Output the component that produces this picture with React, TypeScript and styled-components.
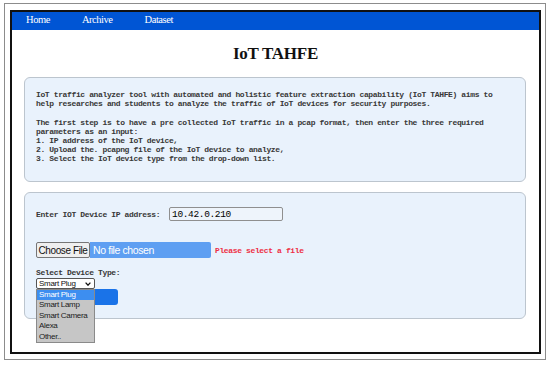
import React from "react";
import styled, { createGlobalStyle } from "styled-components";

const GlobalStyle = createGlobalStyle`
  html, body { margin: 0; padding: 0; background: #fff; }
  body { width: 550px; height: 366px; overflow: hidden; }
`;

const mono = `"Liberation Mono", "DejaVu Sans Mono", monospace`;
const sans = `"Liberation Sans", Arial, sans-serif`;
const serif = `"Liberation Serif", "Times New Roman", serif`;

const Frame = styled.div`
  box-sizing: border-box;
  margin: 3px 0 0 4px;
  width: 542px;
  height: 357px;
  border: 1px solid #8c8c8c;
  padding: 6px 4px 5px 5px;
`;

const Page = styled.div`
  box-sizing: border-box;
  height: 100%;
  border: 2px solid #111;
  display: flex;
  flex-direction: column;
`;

const Nav = styled.nav`
  height: 18px;
  box-sizing: border-box;
  background: #0055d4;
  display: flex;
  align-items: center;
  gap: 32px;
  padding: 0 0 3px 14px;
`;

const NavLink = styled.a`
  font-family: ${serif};
  font-size: 10.5px;
  letter-spacing: -0.45px;
  color: #fff;
  text-decoration: none;
`;

const Title = styled.h1`
  margin: 14px 0 13px;
  text-align: center;
  font-family: ${serif};
  font-weight: bold;
  font-size: 17px;
  line-height: 20px;
  letter-spacing: -0.25px;
  color: #111;
`;

const Panel = styled.section<{ $top?: number }>`
  box-sizing: border-box;
  margin: ${(p) => p.$top ?? 0}px 13px 0 12px;
  background: #e9f2fc;
  border: 1px solid #bcc5ce;
  border-radius: 6px;
`;

const Description = styled.div`
  padding: 12px 11px 18px;
  font-family: ${mono};
  font-size: 8px;
  font-weight: bold;
  line-height: 9px;
  letter-spacing: -0.37px;
  color: #383838;
  white-space: nowrap;
`;

const Para = styled.p`
  margin: 0;
  & + & { margin-top: 10px; }
`;

const Form = styled.form`
  display: flex;
  flex-direction: column;
  align-items: flex-start;
  padding: 14px 11px 13px;
`;

const Row = styled.div<{ $top?: number }>`
  display: flex;
  align-items: center;
  margin-top: ${(p) => p.$top ?? 0}px;
`;

const MonoText = styled.label<{ $color?: string; $top?: number }>`
  font-family: ${mono};
  font-size: 8px;
  font-weight: bold;
  line-height: 9px;
  letter-spacing: -0.37px;
  color: ${(p) => p.$color ?? "#383838"};
  margin-top: ${(p) => p.$top ?? 0}px;
  white-space: nowrap;
`;

const IpInput = styled.input`
  box-sizing: border-box;
  margin: 0 0 0 9px;
  width: 114px;
  height: 14px;
  padding: 0 2px;
  border: 1px solid #8f8f8f;
  border-radius: 2px;
  background: #eef4fb;
  font-family: ${mono};
  font-size: 9.5px;
  letter-spacing: -0.35px;
  color: #000;
  outline: none;
`;

const FileButton = styled.button`
  box-sizing: border-box;
  height: 16px;
  width: 54px;
  padding: 0;
  border: 1px solid #767676;
  border-radius: 2px;
  background: #efefef;
  font-family: ${sans};
  font-size: 10px;
  letter-spacing: -0.4px;
  color: #111;
  white-space: nowrap;
`;

const FileStatus = styled.span`
  box-sizing: border-box;
  display: flex;
  align-items: center;
  height: 16px;
  width: 121px;
  padding-left: 3px;
  background: #5e9ff2;
  border-radius: 0 2px 2px 0;
  font-family: ${sans};
  font-size: 10.5px;
  letter-spacing: -0.4px;
  color: #fff;
  white-space: nowrap;
`;

const Error = styled(MonoText)`
  margin-left: 4px;
`;

const SelectWrap = styled.div`
  position: relative;
  margin-top: 1px;
`;

const SelectBox = styled.div`
  box-sizing: border-box;
  width: 59px;
  height: 11px;
  display: flex;
  align-items: center;
  justify-content: space-between;
  padding: 0 3px 0 2px;
  background: #fff;
  border: 1px solid #555;
  border-radius: 2px;
  font-family: ${sans};
  font-size: 8px;
  letter-spacing: -0.3px;
  color: #111;
`;

const Options = styled.ul`
  position: absolute;
  top: 100%;
  left: 0;
  z-index: 2;
  box-sizing: border-box;
  width: 59px;
  margin: 0;
  padding: 0;
  list-style: none;
  background: #c6c6c6;
  border: 1px solid #8a8a8a;
`;

const Option = styled.li<{ $active?: boolean }>`
  height: 10.4px;
  line-height: 10.4px;
  padding-left: 2px;
  font-family: ${sans};
  font-size: 8px;
  letter-spacing: -0.3px;
  color: ${(p) => (p.$active ? "#fff" : "#1a1a1a")};
  background: ${(p) => (p.$active ? "#3d8ef0" : "transparent")};
  white-space: nowrap;
`;

const Submit = styled.button`
  width: 82px;
  height: 16px;
  border: none;
  border-radius: 3px;
  background: #1a73e8;
`;

const Chevron = () => (
  <svg width="6" height="4" viewBox="0 0 6 4">
    <polyline points="0.6,0.6 3,3.2 5.4,0.6" fill="none" stroke="#111" strokeWidth="1.3" />
  </svg>
);

const options = ["Smart Plug", "Smart Lamp", "Smart Camera", "Alexa", "Other.."];

export default function App() {
  return (
    <>
      <GlobalStyle />
      <Frame>
        <Page>
          <Nav>
            <NavLink href="#">Home</NavLink>
            <NavLink href="#">Archive</NavLink>
            <NavLink href="#">Dataset</NavLink>
          </Nav>
          <Title>IoT TAHFE</Title>
          <Panel>
            <Description>
              <Para>
                IoT traffic analyzer tool with automated and holistic feature extraction capability (IoT TAHFE) aims to
                <br />
                help researches and students to analyze the traffic of IoT devices for security purposes.
              </Para>
              <Para>
                The first step is to have a pre collected IoT traffic in a pcap format, then enter the three required
                <br />
                parameters as an input:
                <br />
                1. IP address of the IoT device,
                <br />
                2. Upload the. pcapng file of the IoT device to analyze,
                <br />
                3. Select the IoT device type from the drop-down list.
              </Para>
            </Description>
          </Panel>
          <Panel $top={10}>
            <Form onSubmit={(e) => e.preventDefault()}>
              <Row>
                <MonoText htmlFor="ip">Enter IOT Device IP address:</MonoText>
                <IpInput id="ip" readOnly defaultValue="10.42.0.210" />
              </Row>
              <Row $top={21}>
                <FileButton type="button">Choose File</FileButton>
                <FileStatus>No file chosen</FileStatus>
                <Error $color="#ee2f45">Please select a file</Error>
              </Row>
              <MonoText $top={10}>Select Device Type:</MonoText>
              <SelectWrap>
                <SelectBox>
                  <span>Smart Plug</span>
                  <Chevron />
                </SelectBox>
                <Options>
                  {options.map((o, i) => (
                    <Option key={o} $active={i === 0}>
                      {o}
                    </Option>
                  ))}
                </Options>
              </SelectWrap>
              <Submit type="submit" aria-label="Submit" />
            </Form>
          </Panel>
        </Page>
      </Frame>
    </>
  );
}
